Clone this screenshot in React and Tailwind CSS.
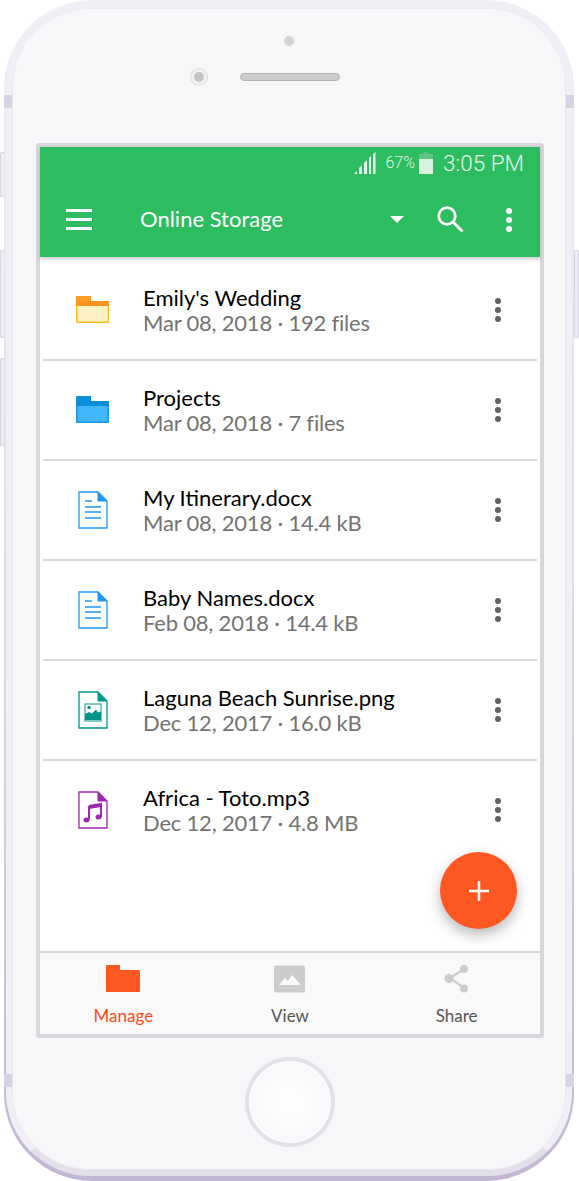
const files = [
  { name: "Emily's Wedding", meta: 'Mar 08, 2018 · 192 files', icon: 'yellow' },
  { name: 'Projects', meta: 'Mar 08, 2018 · 7 files', icon: 'blue' },
  { name: 'My Itinerary.docx', meta: 'Mar 08, 2018 · 14.4 kB', icon: 'doc' },
  { name: 'Baby Names.docx', meta: 'Feb 08, 2018 · 14.4 kB', icon: 'doc' },
  { name: 'Laguna Beach Sunrise.png', meta: 'Dec 12, 2017 · 16.0 kB', icon: 'image' },
  { name: 'Africa - Toto.mp3', meta: 'Dec 12, 2017 · 4.8 MB', icon: 'music' },
];

function FolderIcon({ tab, bar, body, edge }) {
  return (
    <svg width="34" height="28" viewBox="0 0 34 28">
      <path d="M0 1a1 1 0 0 1 1-1h14v5h18v5H0z" fill={tab} />
      <path d="M0 10h33v16a1 1 0 0 1-1 1H1a1 1 0 0 1-1-1z" fill={edge} />
      <rect x="1.500" y="10" width="30" height="15.500" fill={body} />
      <rect y="5" width="33" height="5" fill={bar} />
    </svg>
  );
}

function PageIcon({ color, children }) {
  return (
    <svg width="30" height="38" viewBox="0 0 30 38">
      <path d="M1 1h19l9 9v27H1z" fill="#fff" stroke={color} strokeWidth="1.300" />
      <path d="M20 1l9 9h-9z" fill={color} stroke={color} strokeWidth="1" />
      {children}
    </svg>
  );
}

function FileIcon({ type }) {
  if (type === 'yellow') return <FolderIcon tab="#ff9d29" bar="#ff9320" body="#fff1c4" edge="#ffc21f" />;
  if (type === 'blue') return <FolderIcon tab="#0b8fdc" bar="#0a8cd8" body="#41b6fd" edge="#1a96e6" />;
  if (type === 'doc') {
    return (
      <PageIcon color="#2196f3">
        <path d="M7 10h7M7 16h16M7 21h16M7 27h16" stroke="#2196f3" strokeWidth="1.400" />
      </PageIcon>
    );
  }
  if (type === 'image') {
    return (
      <PageIcon color="#00968a">
        <rect x="7" y="13" width="16" height="17" fill="#fff" stroke="#00968a" strokeWidth="1" />
        <circle cx="11" cy="16.500" r="1.700" fill="#00968a" />
        <path d="M7 29v-6l4-2 3 1.500 4-4 2 3 3-1v8.500z" fill="#00968a" />
      </PageIcon>
    );
  }
  return (
    <PageIcon color="#9c27b0">
      <path d="M11 15l12-2v13" fill="none" stroke="#9c27b0" strokeWidth="2" />
      <path d="M11 15v13" stroke="#9c27b0" strokeWidth="2" />
      <path d="M11 15l12-2v3l-12 2z" fill="#9c27b0" />
      <ellipse cx="8.500" cy="29" rx="3" ry="2.500" fill="#9c27b0" />
      <ellipse cx="20.500" cy="26" rx="3" ry="2.500" fill="#9c27b0" />
    </PageIcon>
  );
}

function Kebab({ dot }) {
  return (
    <div className="flex flex-col gap-[3px]">
      <span className={`w-[6px] h-[6px] rounded-full ${dot}`}></span>
      <span className={`w-[6px] h-[6px] rounded-full ${dot}`}></span>
      <span className={`w-[6px] h-[6px] rounded-full ${dot}`}></span>
    </div>
  );
}

function StatusBar() {
  return (
    <div className="h-[38px] pb-[6px] flex items-center justify-end pr-[16px] text-[#e4f6ea]" style={{ fontFamily: 'Roboto, sans-serif' }}>
      <svg width="22" height="22" viewBox="0 0 22 22">
        <path d="M0 22l3-3v3zM5 22v-6l3-3v9zM10 22v-11l3-3v14zM15 22V6l2-2v18zM19 22V2l2.500-2v22z" fill="#e4f6ea" />
      </svg>
      <span className="ml-[9px] text-[16px] leading-none font-light">67%</span>
      <svg width="14" height="22" viewBox="0 0 14 22" className="ml-[4px]">
        <path d="M4.500 0h5v2H14v5H0V2h4.500z" fill="#5cc585" />
        <rect y="7" width="14" height="15" fill="#d6f1df" />
      </svg>
      <span className="ml-[10px] text-[22.500px] leading-none font-light">3:05 PM</span>
    </div>
  );
}

function Header() {
  return (
    <div className="bg-[#2dbc5f] h-[110px] shadow-[0_2px_4px_rgba(0,0,0,0.22)] relative">
      <StatusBar />
      <div className="h-[72px] flex items-center text-white">
        <div className="ml-[26px] w-[26px] flex flex-col gap-[6px] -mt-[3px]">
          <span className="h-[3px] bg-white"></span>
          <span className="h-[3px] bg-white"></span>
          <span className="h-[3px] bg-white"></span>
        </div>
        <span className="ml-[48px] text-[22px] -mt-[5px] w-[250px]">Online Storage</span>
        <span className="-mt-[3px] w-0 h-0 border-x-[7px] border-x-transparent border-t-[7px] border-t-white"></span>
        <svg width="27" height="27" viewBox="0 0 27 27" className="ml-[33px] -mt-[3px]">
          <circle cx="10" cy="10" r="8.300" fill="none" stroke="#fff" strokeWidth="2.800" />
          <path d="M16 16l9.500 9.500" stroke="#fff" strokeWidth="3" />
        </svg>
        <div className="ml-[42px] -mt-[3px]">
          <Kebab dot="bg-white" />
        </div>
      </div>
    </div>
  );
}

function FileRow({ file, last }) {
  return (
    <div className={`h-[100px] mx-[3px] flex items-center border-b-2 ${last ? 'border-transparent' : 'border-[#d9d9d9]'}`}>
      <div className="w-[100px] flex justify-center shrink-0">
        <FileIcon type={file.icon} />
      </div>
      <div className="flex-1">
        <div className="text-[22px] leading-[25px] text-black">{file.name}</div>
        <div className="text-[22px] leading-[25px] tracking-[-0.2px] text-[#737373]">{file.meta}</div>
      </div>
      <div className="mr-[36px]">
        <Kebab dot="bg-[#616161]" />
      </div>
    </div>
  );
}

function BottomNav() {
  return (
    <div className="h-[83px] bg-[#f9f9fa] border-t-2 border-[#d6d6d8] grid grid-cols-3 text-center text-[17px] text-[#565656]">
      <div className="flex flex-col items-center pt-[12px] text-[#fb4a1b]">
        <svg width="34" height="28" viewBox="0 0 34 28">
          <path d="M0 1a1 1 0 0 1 1-1h13v5h19a1 1 0 0 1 1 1v20a1 1 0 0 1-1 1H1a1 1 0 0 1-1-1z" fill="#ff5722" />
        </svg>
        <span className="mt-[12px] leading-[22px]">Manage</span>
      </div>
      <div className="flex flex-col items-center pt-[12px]">
        <svg width="32" height="28" viewBox="0 0 32 28">
          <rect y="0.500" width="31" height="27" rx="2" fill="#cccccc" />
          <path d="M5 20l6-7 3 3 4-6 9 10z" fill="#f9f9fa" />
        </svg>
        <span className="mt-[12px] leading-[22px]">View</span>
      </div>
      <div className="flex flex-col items-center pt-[11px]">
        <svg width="26" height="30" viewBox="0 0 26 30">
          <path d="M20 5L6 14l14 10" fill="none" stroke="#cccccc" strokeWidth="2.200" />
          <circle cx="20" cy="5" r="4" fill="#cccccc" />
          <circle cx="5" cy="14.500" r="4.500" fill="#cccccc" />
          <circle cx="20" cy="24.500" r="4" fill="#cccccc" />
        </svg>
        <span className="mt-[11px] leading-[22px]">Share</span>
      </div>
    </div>
  );
}

function SideButton({ className }) {
  return <span className={`absolute w-[5px] bg-[#eeebf2] border border-[#d8d3e0] rounded-[1px] ${className}`}></span>;
}

export default function App() {
  return (
    <div className="relative w-[579px] h-[1181px] bg-white overflow-hidden" style={{ fontFamily: 'Lato, sans-serif' }}>
      <SideButton className="left-0 top-[152px] h-[45px]" />
      <SideButton className="left-0 top-[250px] h-[88px]" />
      <SideButton className="left-0 top-[358px] h-[88px]" />
      <SideButton className="right-0 top-[250px] h-[88px]" />

      {/* body of the phone */}
      <div className="absolute left-[4px] top-0 w-[570px] h-[1181px] rounded-[88px] bg-gradient-to-b from-[#f1f0f5] via-[#dedae6] to-[#c2b7d3] p-[2px] pb-[5px]">
        <div className="relative w-full h-full rounded-[84px] bg-[#f7f7fa] border-[6px] border-[#f1eff5] border-b-[#e2deea] shadow-[inset_0_0_0_1px_#eae8ef]">
          <div className="flex flex-col items-center">
            <span className="mt-[28px] w-[10px] h-[10px] rounded-full bg-[#d4d4d6]"></span>
            <div className="relative mt-[27px] ml-[1px]">
              <span className="absolute right-full top-[-4px] mr-[33px] w-[16px] h-[16px] rounded-full bg-[#c4c4c6] border-[3px] border-[#f0f0f2] ring-1 ring-[#dcdcde]"></span>
              <span className="block w-[100px] h-[8px] rounded-full bg-[#cbcbcd] border border-[#b5b5b7]"></span>
            </div>
          </div>

          {/* screen */}
          <div className="absolute left-[24px] top-[135px] w-[508px] h-[895px] border-[4px] border-[#d8d8dc] rounded-[3px] bg-white flex flex-col">
            <Header />
            <div className="h-[4px]"></div>
            <div className="flex-1 relative">
              {files.map((file, i) => (
                <FileRow key={file.name} file={file} last={i === files.length - 1} />
              ))}
              <button className="absolute right-[23px] bottom-[22px] w-[77px] h-[77px] rounded-full bg-[#ff5722] shadow-[0_6px_14px_rgba(0,0,0,0.28)] flex items-center justify-center">
                <svg width="20" height="20" viewBox="0 0 20 20">
                  <path d="M10 0v20M0 10h20" stroke="#fff" strokeWidth="2.500" />
                </svg>
              </button>
            </div>
            <BottomNav />
          </div>

          {/* home button */}
          <div className="absolute left-[233px] top-[1049px] w-[90px] h-[90px] rounded-full bg-radial from-white to-[#f6f6f9] border-[4px] border-[#e3e0e9] shadow-[inset_0_0_0_1px_#ffffff]"></div>
        </div>
      </div>

      {/* antenna bands */}
      <span className="absolute left-[4px] top-[95px] w-[8px] h-[13px] bg-[#d8d3e2]"></span>
      <span className="absolute right-[5px] top-[95px] w-[8px] h-[13px] bg-[#d8d3e2]"></span>
      <span className="absolute left-[4px] top-[1074px] w-[8px] h-[13px] bg-[#d8d3e2]"></span>
      <span className="absolute right-[5px] top-[1074px] w-[8px] h-[13px] bg-[#d8d3e2]"></span>
    </div>
  );
}
